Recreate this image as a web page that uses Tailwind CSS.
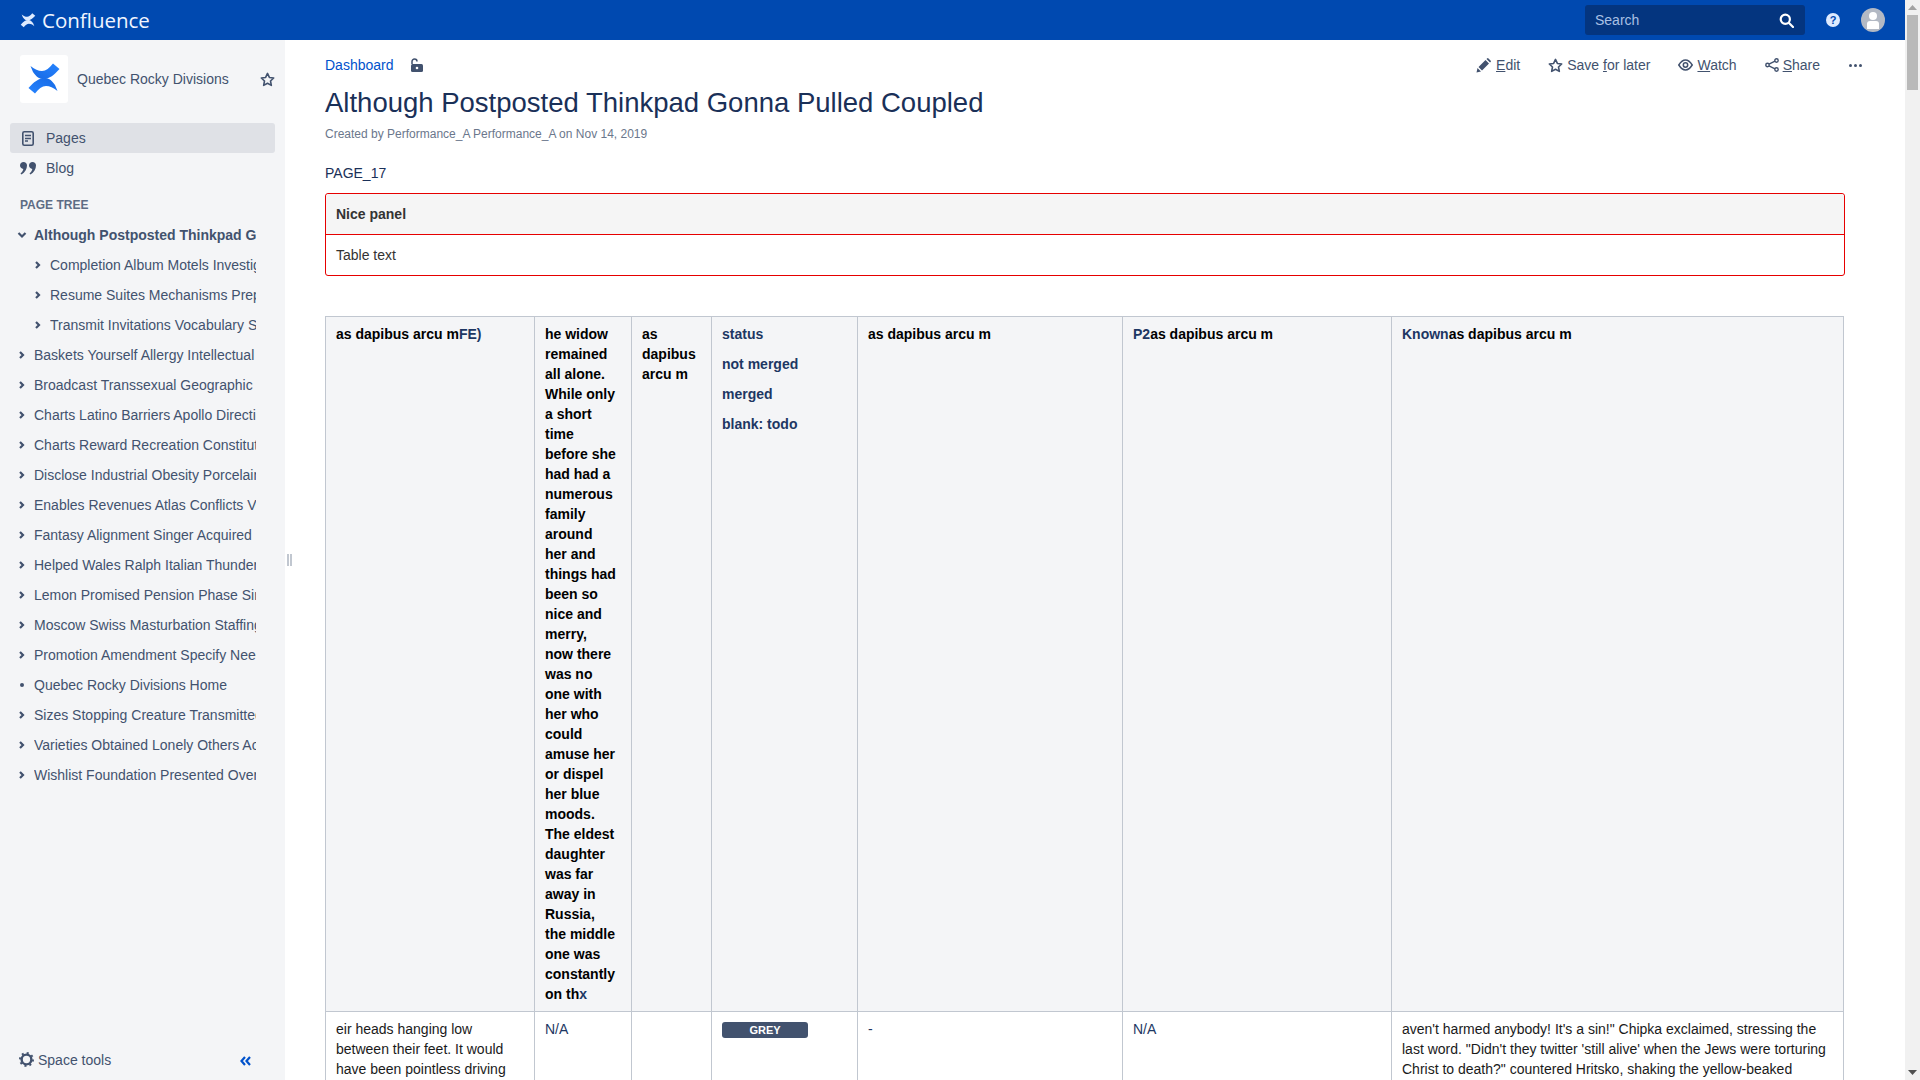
<!DOCTYPE html>
<html lang="en">
<head>
    <meta charset="UTF-8">
    <meta name="viewport" content="width=device-width, initial-scale=1.0">
    <title>Although Postposted Thinkpad Gonna Pulled Coupled</title>
    <script src="https://cdn.jsdelivr.net/npm/@tailwindcss/browser@4"></script>
</head>
<body class="h-screen overflow-hidden flex flex-col bg-white font-['Liberation_Sans',Arial,sans-serif] text-[14px] leading-[20px] text-[#1a3058]">

<!-- top bar -->
<header class="h-10 shrink-0 bg-[#0049b0] flex items-center text-white">
    <div class="flex items-center pl-5 gap-[6px]">
        <svg width="16" height="15" viewBox="0 0 32 32" fill="#deebff"><path d="M2.5 3C7 6.500 10 8 14 8C18 8 21.500 5 25 .5L31.500 6C26 12 21 16.500 14.500 16C10.500 15.700 8 13 5 9Z"/><path transform="rotate(180 16 15.500)" d="M2.500 3C7 6.500 10 8 14 8C18 8 21.500 5 25 .5L31.500 6C26 12 21 16.500 14.500 16C10.500 15.700 8 13 5 9Z"/></svg>
        <span class="text-[20.5px] leading-10 font-['Open_Sans',sans-serif] text-[#f0f5ff]">Confluence</span>
    </div>
    <div class="ml-auto flex items-center">
        <div class="w-[220px] h-[30px] bg-[#04357f] rounded-[3px] flex items-center justify-between pl-[10px] pr-[11px] text-[#a9c0e4]">
            <span>Search</span>
            <svg width="15" height="15" viewBox="0 0 15 15" fill="none" stroke="#fff" stroke-width="2.2"><circle cx="6.3" cy="6.3" r="4.6"/><path d="M10 10l4 4" stroke-linecap="round"/></svg>
        </div>
        <div class="w-5 h-5 ml-[18px] flex items-center justify-center">
            <svg width="14" height="14" viewBox="0 0 14 14"><circle cx="7" cy="7" r="7" fill="#deebff"/><text x="7" y="11" text-anchor="middle" font-size="11" font-weight="700" fill="#0049b0" font-family="Liberation Sans">?</text></svg>
        </div>
        <div class="w-6 h-6 ml-[18px] mr-[20px] rounded-full bg-[#b3b9c4] overflow-hidden flex flex-col items-center pt-[4px]">
            <span class="w-[8px] h-[8px] rounded-full bg-white"></span>
            <span class="w-[12px] h-[8px] rounded-t-[3px] bg-white mt-[1px]"></span>
        </div>
        <div class="w-[15px]"></div>
    </div>
</header>

<div class="flex-1 flex min-h-0">
    <!-- sidebar -->
    <aside class="w-[285px] shrink-0 bg-[#f4f5f7] flex flex-col text-[#42526e] overflow-hidden">
        <div class="flex items-center pl-5 pt-[15px]">
            <div class="w-12 h-12 bg-white rounded-[3px] flex items-center justify-center">
                <svg width="32" height="32" viewBox="0 0 32 32"><defs><linearGradient id="logo-top" x1="0" y1="1" x2="1" y2="0"><stop offset="0" stop-color="#1668e3"/><stop offset="1" stop-color="#2684ff"/></linearGradient></defs><path fill="url(#logo-top)" d="M2.500 3C7 6.500 10 8 14 8C18 8 21.500 5 25 .5L31.500 6C26 12 21 16.500 14.500 16C10.500 15.700 8 13 5 9Z"/><path fill="url(#logo-top)" transform="rotate(180 16 15.500)" d="M2.500 3C7 6.500 10 8 14 8C18 8 21.500 5 25 .5L31.500 6C26 12 21 16.500 14.500 16C10.500 15.700 8 13 5 9Z"/></svg>
            </div>
            <span class="ml-[9px] w-[183px]">Quebec Rocky Divisions</span>
            <svg width="15" height="15" viewBox="0 0 16 16" fill="none" stroke="#42526e" stroke-width="1.7" stroke-linejoin="round"><path d="M8 1.500l2 4.300 4.600.6-3.400 3.200.9 4.700L8 12l-4.100 2.300.9-4.700L1.400 6.400 6 5.800z"/></svg>
        </div>
        <nav class="mt-5 px-[10px]">
            <div class="h-[30px] bg-[#dfe1e6] rounded-[3px] flex items-center pl-[12px]">
                <svg width="12" height="15" viewBox="0 0 12 15" fill="none" stroke="#42526e"><rect x="0.8" y="0.8" width="10.4" height="13.4" rx="1.5" stroke-width="1.6"/><path d="M3 4.500h6M3 7.500h6M3 10h3" stroke-width="1.4"/></svg>
                <span class="ml-[12px]">Pages</span>
            </div>
            <div class="h-[30px] flex items-center pl-[10px]">
                <svg width="16" height="13" viewBox="0 0 16 13" fill="#42526e"><path d="M3.5 0C5.500 0 7 1.500 7 3.500 7 7 5 10.500 1.500 12.500L.5 11.500C2 10.300 3 8.800 3.300 7 1.500 6.800 0 5.300 0 3.500 0 1.500 1.500 0 3.500 0z"/><path d="M12.500 0C14.500 0 16 1.500 16 3.500c0 3.500-2 7-5.500 9l-1-1c1.500-1.200 2.500-2.700 2.800-4.500C10.500 6.800 9 5.300 9 3.500 9 1.500 10.500 0 12.500 0z"/></svg>
                <span class="ml-[10px]">Blog</span>
            </div>
        </nav>
        <h2 class="mt-[14px] pl-5 text-[12px] leading-[16px] font-bold text-[#5e6c84]">PAGE TREE</h2>
        <ul class="mt-[7px] w-[256px] text-[14px]">
            <li class="h-[30px] flex items-center pl-[17px]"><svg class="w-[10px] h-[10px] shrink-0" viewBox="0 0 10 10" fill="none" stroke="#42526e" stroke-width="2.2"><path d="M1.500 3l3.500 3.500L8.500 3"/></svg><span class="ml-[7px] font-bold overflow-hidden whitespace-nowrap">Although Postposted Thinkpad Gonna Pulled</span></li>
            <li class="h-[30px] flex items-center pl-[33px]"><svg class="w-[10px] h-[10px] shrink-0" viewBox="0 0 10 10" fill="none" stroke="#42526e" stroke-width="2.2"><path d="M3 2L6 5 3 8"/></svg><span class="ml-[7px] overflow-hidden whitespace-nowrap">Completion Album Motels Investigation</span></li>
            <li class="h-[30px] flex items-center pl-[33px]"><svg class="w-[10px] h-[10px] shrink-0" viewBox="0 0 10 10" fill="none" stroke="#42526e" stroke-width="2.2"><path d="M3 2L6 5 3 8"/></svg><span class="ml-[7px] overflow-hidden whitespace-nowrap">Resume Suites Mechanisms Prepared</span></li>
            <li class="h-[30px] flex items-center pl-[33px]"><svg class="w-[10px] h-[10px] shrink-0" viewBox="0 0 10 10" fill="none" stroke="#42526e" stroke-width="2.2"><path d="M3 2L6 5 3 8"/></svg><span class="ml-[7px] overflow-hidden whitespace-nowrap">Transmit Invitations Vocabulary Sized</span></li>
            <li class="h-[30px] flex items-center pl-[17px]"><svg class="w-[10px] h-[10px] shrink-0" viewBox="0 0 10 10" fill="none" stroke="#42526e" stroke-width="2.2"><path d="M3 2L6 5 3 8"/></svg><span class="ml-[7px] overflow-hidden whitespace-nowrap">Baskets Yourself Allergy Intellectual Sized</span></li>
            <li class="h-[30px] flex items-center pl-[17px]"><svg class="w-[10px] h-[10px] shrink-0" viewBox="0 0 10 10" fill="none" stroke="#42526e" stroke-width="2.2"><path d="M3 2L6 5 3 8"/></svg><span class="ml-[7px] overflow-hidden whitespace-nowrap">Broadcast Transsexual Geographic Sized</span></li>
            <li class="h-[30px] flex items-center pl-[17px]"><svg class="w-[10px] h-[10px] shrink-0" viewBox="0 0 10 10" fill="none" stroke="#42526e" stroke-width="2.2"><path d="M3 2L6 5 3 8"/></svg><span class="ml-[7px] overflow-hidden whitespace-nowrap">Charts Latino Barriers Apollo Directions</span></li>
            <li class="h-[30px] flex items-center pl-[17px]"><svg class="w-[10px] h-[10px] shrink-0" viewBox="0 0 10 10" fill="none" stroke="#42526e" stroke-width="2.2"><path d="M3 2L6 5 3 8"/></svg><span class="ml-[7px] overflow-hidden whitespace-nowrap">Charts Reward Recreation Constitutional</span></li>
            <li class="h-[30px] flex items-center pl-[17px]"><svg class="w-[10px] h-[10px] shrink-0" viewBox="0 0 10 10" fill="none" stroke="#42526e" stroke-width="2.2"><path d="M3 2L6 5 3 8"/></svg><span class="ml-[7px] overflow-hidden whitespace-nowrap">Disclose Industrial Obesity Porcelain Sized</span></li>
            <li class="h-[30px] flex items-center pl-[17px]"><svg class="w-[10px] h-[10px] shrink-0" viewBox="0 0 10 10" fill="none" stroke="#42526e" stroke-width="2.2"><path d="M3 2L6 5 3 8"/></svg><span class="ml-[7px] overflow-hidden whitespace-nowrap">Enables Revenues Atlas Conflicts Vertical</span></li>
            <li class="h-[30px] flex items-center pl-[17px]"><svg class="w-[10px] h-[10px] shrink-0" viewBox="0 0 10 10" fill="none" stroke="#42526e" stroke-width="2.2"><path d="M3 2L6 5 3 8"/></svg><span class="ml-[7px] overflow-hidden whitespace-nowrap">Fantasy Alignment Singer Acquired</span></li>
            <li class="h-[30px] flex items-center pl-[17px]"><svg class="w-[10px] h-[10px] shrink-0" viewBox="0 0 10 10" fill="none" stroke="#42526e" stroke-width="2.2"><path d="M3 2L6 5 3 8"/></svg><span class="ml-[7px] overflow-hidden whitespace-nowrap">Helped Wales Ralph Italian Thunder Sized</span></li>
            <li class="h-[30px] flex items-center pl-[17px]"><svg class="w-[10px] h-[10px] shrink-0" viewBox="0 0 10 10" fill="none" stroke="#42526e" stroke-width="2.2"><path d="M3 2L6 5 3 8"/></svg><span class="ml-[7px] overflow-hidden whitespace-nowrap">Lemon Promised Pension Phase Similar</span></li>
            <li class="h-[30px] flex items-center pl-[17px]"><svg class="w-[10px] h-[10px] shrink-0" viewBox="0 0 10 10" fill="none" stroke="#42526e" stroke-width="2.2"><path d="M3 2L6 5 3 8"/></svg><span class="ml-[7px] overflow-hidden whitespace-nowrap">Moscow Swiss Masturbation Staffing Sized</span></li>
            <li class="h-[30px] flex items-center pl-[17px]"><svg class="w-[10px] h-[10px] shrink-0" viewBox="0 0 10 10" fill="none" stroke="#42526e" stroke-width="2.2"><path d="M3 2L6 5 3 8"/></svg><span class="ml-[7px] overflow-hidden whitespace-nowrap">Promotion Amendment Specify Needed</span></li>
            <li class="h-[30px] flex items-center pl-[20px]"><span class="w-[4px] h-[4px] rounded-full bg-[#42526e] shrink-0"></span><span class="ml-[10px] overflow-hidden whitespace-nowrap">Quebec Rocky Divisions Home</span></li>
            <li class="h-[30px] flex items-center pl-[17px]"><svg class="w-[10px] h-[10px] shrink-0" viewBox="0 0 10 10" fill="none" stroke="#42526e" stroke-width="2.2"><path d="M3 2L6 5 3 8"/></svg><span class="ml-[7px] overflow-hidden whitespace-nowrap">Sizes Stopping Creature Transmitted Sized</span></li>
            <li class="h-[30px] flex items-center pl-[17px]"><svg class="w-[10px] h-[10px] shrink-0" viewBox="0 0 10 10" fill="none" stroke="#42526e" stroke-width="2.2"><path d="M3 2L6 5 3 8"/></svg><span class="ml-[7px] overflow-hidden whitespace-nowrap">Varieties Obtained Lonely Others Acquired</span></li>
            <li class="h-[30px] flex items-center pl-[17px]"><svg class="w-[10px] h-[10px] shrink-0" viewBox="0 0 10 10" fill="none" stroke="#42526e" stroke-width="2.2"><path d="M3 2L6 5 3 8"/></svg><span class="ml-[7px] overflow-hidden whitespace-nowrap">Wishlist Foundation Presented Overall</span></li>
        </ul>
        <div class="mt-auto h-[40px] flex items-center pl-[19px] pr-[34px] pb-[1px]">
            <svg width="15" height="15" viewBox="0 0 16 16" fill="none" stroke="#42526e"><circle cx="8" cy="8" r="5.2" stroke-width="2.6"/><circle cx="8" cy="8" r="7" stroke-width="2" stroke-dasharray="2.2 3.3"/></svg>
            <span class="ml-[4px]">Space tools</span>
            <svg class="ml-auto mt-[2px]" width="11" height="10" viewBox="0 0 11 10" fill="none" stroke="#0052cc" stroke-width="2.2"><path d="M5 1L1.500 5 5 9M10 1L6.500 5 10 9"/></svg>
        </div>
    </aside>

    <!-- content -->
    <main class="flex-1 min-w-0 overflow-hidden relative pl-[40px] pr-[75px]">
        <span class="absolute left-[2px] top-[514px] w-[5px] h-[12px] border-x-2 border-[#c1c7d0]"></span>

        <div class="flex items-center h-[26px] mt-[12px]">
            <a class="text-[#0052cc]">Dashboard</a>
            <svg class="ml-[16px] mb-[1px]" width="13" height="14" viewBox="0 0 13 14"><path d="M2 6V3.500a2.500 2.500 0 0 1 5 0" fill="none" stroke="#42526e" stroke-width="1.5"/><rect x="1" y="6" width="12" height="8" rx="1.5" fill="#42526e"/><circle cx="7" cy="10" r="1.3" fill="#fff"/></svg>
            <div class="ml-auto flex items-center text-[#42526e] mr-[-34px]">
                <span class="flex items-center"><svg width="15" height="15" viewBox="0 0 15 15" fill="#42526e"><path d="M0.5 14.500l1-4.500 3.500 3.500zM2.500 9l7-7 3.500 3.500-7 7zM10.500 1l.5-.5a1 1 0 0 1 1.500 0l2 2a1 1 0 0 1 0 1.500l-.5.5z"/></svg><span class="ml-[5px]"><u>E</u>dit</span></span>
                <span class="flex items-center ml-[28px]"><svg width="15" height="15" viewBox="0 0 16 16" fill="none" stroke="#42526e" stroke-width="1.7" stroke-linejoin="round"><path d="M8 1.500l2 4.300 4.600.6-3.400 3.200.9 4.700L8 12l-4.100 2.300.9-4.700L1.400 6.400 6 5.800z"/></svg><span class="ml-[4px]">Save <u>f</u>or later</span></span>
                <span class="flex items-center ml-[28px]"><svg width="15" height="12" viewBox="0 0 15 12" fill="none" stroke="#42526e" stroke-width="1.5"><path d="M.8 6C3 2.500 5 1 7.500 1s4.500 1.500 6.700 5c-2.200 3.500-4.200 5-6.700 5S3 9.500.8 6z"/><circle cx="7.500" cy="6" r="2.2"/></svg><span class="ml-[4px]"><u>W</u>atch</span></span>
                <span class="flex items-center ml-[28px]"><svg width="14" height="14" viewBox="0 0 14 14" fill="none" stroke="#42526e" stroke-width="1.4"><circle cx="2.500" cy="7" r="1.7"/><circle cx="11.500" cy="2.500" r="1.7"/><circle cx="11.500" cy="11.500" r="1.7"/><path d="M4 6.200l6-3M4 7.800l6 3"/></svg><span class="ml-[4px]"><u>S</u>hare</span></span>
                <span class="ml-[29px] flex gap-[2px] w-[30px]"><i class="w-[3px] h-[3px] rounded-full bg-[#42526e]"></i><i class="w-[3px] h-[3px] rounded-full bg-[#42526e]"></i><i class="w-[3px] h-[3px] rounded-full bg-[#42526e]"></i></span>
            </div>
        </div>

        <h1 class="mt-[7px] text-[27.5px] leading-[36px] font-normal">Although Postposted Thinkpad Gonna Pulled Coupled</h1>
        <p class="mt-[5px] text-[12px] leading-[16px] text-[#6b778c]">Created by Performance_A Performance_A on Nov 14, 2019</p>

        <p class="mt-[21px]">PAGE_17</p>

        <div class="mt-[10px] border border-[#e60000] rounded-[3px] text-[#333333]">
            <div class="h-[41px] bg-[#f5f5f5] border-b border-[#e60000] rounded-t-[3px] px-[10px] flex items-center font-bold">Nice panel</div>
            <div class="h-[40px] px-[10px] flex items-center">Table text</div>
        </div>

        <table class="mt-[40px] w-[1519px] table-fixed border-collapse text-black">
            <colgroup>
                <col class="w-[209px]"><col class="w-[97px]"><col class="w-[80px]"><col class="w-[146px]"><col class="w-[265px]"><col class="w-[269px]"><col class="w-[452px]">
            </colgroup>
            <tbody>
            <tr class="bg-[#f4f5f7] font-bold align-top">
                <td class="border border-[#c1c7d0] px-[10px] pt-[7px] pb-[7px]">as dapibus arcu m<span class="text-[#1d3763]">FE)</span></td>
                <td class="border border-[#c1c7d0] pl-[10px] pr-[15px] pt-[7px] pb-[7px]">he widow remained all alone. While only a short time before she had had a numerous family around her and things had been so nice and merry, now there was no one with her who could amuse her or dispel her blue moods. The eldest daughter was far away in Russia, the middle one was constantly on th<span class="text-[#1d3763]">x</span></td>
                <td class="border border-[#c1c7d0] px-[10px] pt-[7px] pb-[7px]">as dapibus arcu m</td>
                <td class="border border-[#c1c7d0] px-[10px] pt-[7px] pb-[7px] text-[#1d3763]">
                    <p>status</p>
                    <p class="mt-[10px]">not merged</p>
                    <p class="mt-[10px]">merged</p>
                    <p class="mt-[10px]">blank: todo</p>
                </td>
                <td class="border border-[#c1c7d0] px-[10px] pt-[7px] pb-[7px]">as dapibus arcu m</td>
                <td class="border border-[#c1c7d0] px-[10px] pt-[7px] pb-[7px]"><span class="text-[#1d3763]">P2</span>as dapibus arcu m</td>
                <td class="border border-[#c1c7d0] px-[10px] pt-[7px] pb-[7px]"><span class="text-[#1d3763]">Known</span>as dapibus arcu m</td>
            </tr>
            <tr class="align-top">
                <td class="border border-[#c1c7d0] px-[10px] pt-[7px] pb-[7px] text-[#1a1a1a]">eir heads hanging low between their feet. It would have been pointless driving them on.</td>
                <td class="border border-[#c1c7d0] px-[10px] pt-[7px] pb-[7px] text-[#1d3763]">N/A</td>
                <td class="border border-[#c1c7d0] px-[10px] pt-[7px] pb-[7px]"></td>
                <td class="border border-[#c1c7d0] px-[10px] pt-[7px] pb-[7px]"><span class="mt-[3px] w-[86px] h-[16px] rounded-[3px] bg-[#42526e] text-white text-[11px] leading-[16px] font-bold flex items-center justify-center">GREY</span></td>
                <td class="border border-[#c1c7d0] px-[10px] pt-[7px] pb-[7px] text-[#1d3763]">-</td>
                <td class="border border-[#c1c7d0] px-[10px] pt-[7px] pb-[7px] text-[#1d3763]">N/A</td>
                <td class="border border-[#c1c7d0] px-[10px] pt-[7px] pb-[7px] text-[#1a1a1a]">aven't harmed anybody! It's a sin!" Chipka exclaimed, stressing the last word. "Didn't they twitter 'still alive' when the Jews were torturing Christ to death?" countered Hritsko, shaking the yellow-beaked</td>
            </tr>
            </tbody>
        </table>
    </main>
</div>

<!-- page scrollbar -->
<div class="fixed right-0 top-0 bottom-0 w-[15px] bg-[#f1f1f1] flex flex-col items-center">
    <span class="h-[15px] flex items-center"><svg width="9" height="5" viewBox="0 0 9 5" fill="#a3a3a3"><path d="M4.500 0L9 5H0z"/></svg></span>
    <span class="w-[11px] h-[75px] bg-[#b9b9b9]"></span>
    <span class="mt-auto h-[15px] flex items-center"><svg width="9" height="5" viewBox="0 0 9 5" fill="#505050"><path d="M4.500 5L9 0H0z"/></svg></span>
</div>

</body>
</html>
